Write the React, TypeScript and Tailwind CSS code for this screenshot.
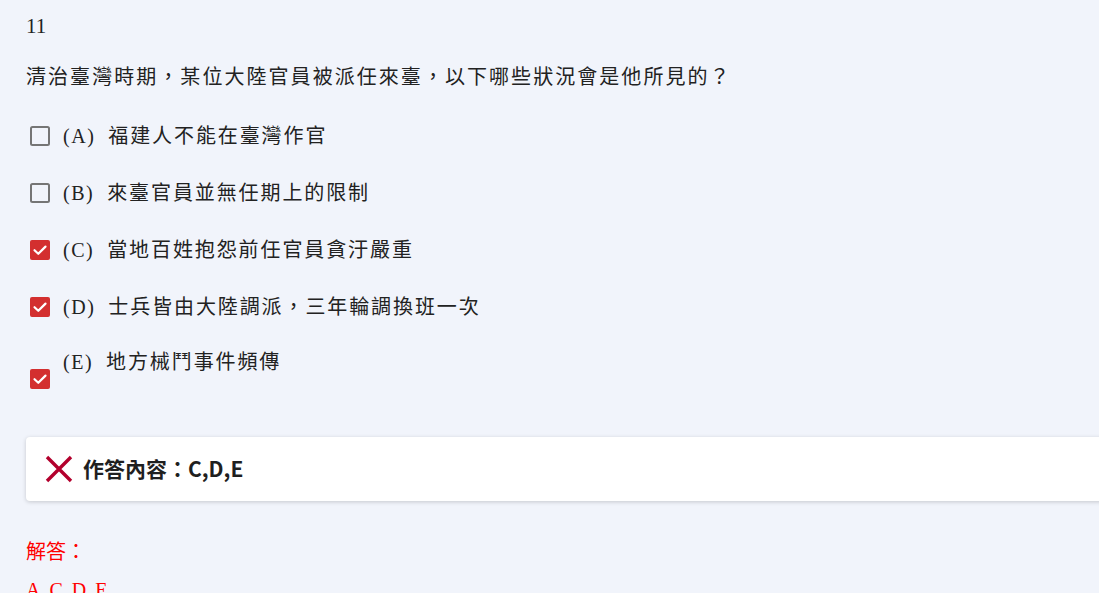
import React from "react";

const serif = { fontFamily: '"Liberation Serif", "Noto Sans CJK TC", serif' };

function Box({ checked }: { checked: boolean }) {
  if (checked) {
    return (
      <svg width="20" height="20" viewBox="0 0 20 20" className="shrink-0">
        <rect x="0" y="0" width="20" height="20" rx="2" fill="#d32f2f" />
        <path d="M4.5 10.2 L8.3 13.8 L15.5 6.6" fill="none" stroke="#fff" strokeWidth="2.2" strokeLinecap="round" strokeLinejoin="round" />
      </svg>
    );
  }
  return (
    <svg width="20" height="20" viewBox="0 0 20 20" className="shrink-0">
      <rect x="1" y="1" width="18" height="18" rx="1.5" fill="none" stroke="#757575" strokeWidth="2" />
    </svg>
  );
}

const options = [
  { key: "A", text: "福建人不能在臺灣作官", checked: false },
  { key: "B", text: "來臺官員並無任期上的限制", checked: false },
  { key: "C", text: "當地百姓抱怨前任官員貪汙嚴重", checked: true },
  { key: "D", text: "士兵皆由大陸調派，三年輪調換班一次", checked: true },
];

export default function App() {
  return (
    <div className="w-[1099px] h-[593px] overflow-hidden bg-[#f1f4fb] text-[#222]" style={serif}>
      <div className="pl-[26px] pt-[12px]">
        <div className="text-[21px] leading-[28px]">11</div>
        <p className="mt-[23px] text-[20px] leading-[28px] tracking-[2.05px]">
          清治臺灣時期，某位大陸官員被派任來臺，以下哪些狀況會是他所見的？
        </p>

        <div className="mt-[16px] pl-[4px]">
          {options.map((o) => (
            <div key={o.key} className="flex items-center h-[57px]">
              <Box checked={o.checked} />
              <span className="ml-[13px] text-[20px] leading-[28px] tracking-[1.5px]">({o.key})</span>
              <span className="ml-[13px] text-[20px] leading-[28px] tracking-[1.9px]">{o.text}</span>
            </div>
          ))}
          <div className="flex items-start h-[55px]">
            <div className="mt-[34px]">
              <Box checked />
            </div>
            <span className="ml-[13px] mt-[13px] text-[20px] leading-[28px] tracking-[1.5px]">(E)</span>
            <span className="ml-[13px] mt-[13px] text-[20px] leading-[28px] tracking-[1.9px]">地方械鬥事件頻傳</span>
          </div>
        </div>

        <div className="mt-[47px] w-[1100px] h-[64px] bg-white rounded-[4px] shadow-[0_1px_4px_rgba(0,0,0,0.18)] flex items-center pl-[19px]">
          <svg width="28" height="28" viewBox="0 0 28 28" className="shrink-0">
            <path d="M2 2 L26 26 M26 2 L2 26" stroke="#b3002d" strokeWidth="3.4" />
          </svg>
          <span
            className="ml-[10px] text-[21px] font-bold text-[#1f1f1f]"
            style={{ fontFamily: '"Noto Sans CJK TC", "Noto Sans", sans-serif' }}
          >
            作答內容：C,D,E
          </span>
        </div>

        <div className="mt-[37px] text-[20px] leading-[28px] text-[#f00]">解答：</div>
        <div className="mt-[10px] text-[20px] leading-[28px] text-[#f00] tracking-[2px]">A,C,D,E</div>
      </div>
    </div>
  );
}
